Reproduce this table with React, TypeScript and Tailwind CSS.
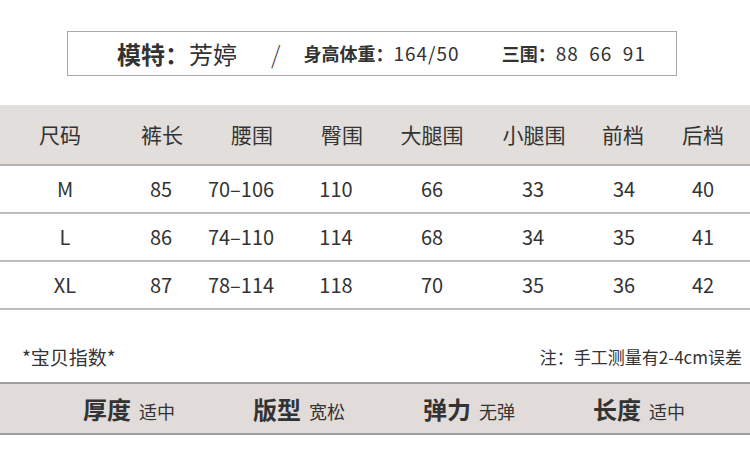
const font = "font-['Noto_Sans_CJK_SC','Noto_Sans',sans-serif]";

const headCells = [
  { label: '尺码', w: 'w-[120px]' },
  { label: '裤长', w: 'w-[84px]' },
  { label: '腰围', w: 'w-[96px]' },
  { label: '臀围', w: 'w-[84px]' },
  { label: '大腿围', w: 'w-[96px]' },
  { label: '小腿围', w: 'w-[108px]' },
  { label: '前档', w: 'w-[70px]' },
  { label: '后档', w: 'w-[90px]' },
];

const bodyWidths = [
  'w-[130px]', 'w-[62px]', 'w-[98px]', 'w-[92px]',
  'w-[100px]', 'w-[102px]', 'w-[80px]', 'w-[78px]',
];

const rows = [
  ['M', '85', '70–106', '110', '66', '33', '34', '40'],
  ['L', '86', '74–110', '114', '68', '34', '35', '41'],
  ['XL', '87', '78–114', '118', '70', '35', '36', '42'],
];

const traits = [
  { name: '厚度', value: '适中' },
  { name: '版型', value: '宽松' },
  { name: '弹力', value: '无弹' },
  { name: '长度', value: '适中' },
];

export default function App() {
  return (
    <div className={`w-[750px] h-[454px] bg-white text-[#333] overflow-hidden ${font}`}>
      {/* model info box */}
      <div className="pt-[31px] pl-[67px]">
        <div className="w-[610px] h-[45px] border border-[#a8a8a8] flex items-center">
          <div className="pl-[49px] flex items-center">
            <span className="text-[24px] font-bold">模特：</span>
            <span className="text-[24px]">芳婷</span>
          </div>
          <span className="ml-[34px] text-[24px] font-light text-[#444]">/</span>
          <div className="ml-[23px] flex items-center">
            <span className="text-[18px] font-bold">身高体重：</span>
            <span className="text-[19px] tracking-[1px]">164/50</span>
          </div>
          <div className="ml-[42px] flex items-center">
            <span className="text-[18px] font-bold">三围：</span>
            <span className="text-[19px] tracking-[1px] whitespace-pre">88  66  91</span>
          </div>
        </div>
      </div>

      {/* size table */}
      <div className="mt-[29px]">
        <div className="h-[61px] bg-[#e2dedb] border-b-2 border-[#b3b3b3] flex items-center">
          {headCells.map((c) => (
            <div key={c.label} className={`${c.w} flex justify-center whitespace-nowrap text-[21px]`}>
              {c.label}
            </div>
          ))}
        </div>
        {rows.map((r) => (
          <div key={r[0]} className="h-[48px] border-b-2 border-[#bdbdbd] flex items-center">
            {r.map((v, i) => (
              <div key={i} className={`${bodyWidths[i]} flex justify-center whitespace-nowrap text-[20px]`}>
                {v}
              </div>
            ))}
          </div>
        ))}
      </div>

      {/* notes */}
      <div className="h-[72px] flex items-center justify-between pl-[22px] pr-[8px] pt-[22px]">
        <span className="text-[19px]">*宝贝指数*</span>
        <span className="text-[17px]">注：手工测量有2-4cm误差</span>
      </div>

      {/* traits band */}
      <div className="h-[53px] bg-[#e1dcda] border-y-2 border-[#9e9e9e] flex items-center pl-[44px]">
        {traits.map((t) => (
          <div key={t.name} className="w-[170px] flex justify-center items-baseline gap-[8px]">
            <span className="text-[24px] font-bold">{t.name}</span>
            <span className="text-[18px]">{t.value}</span>
          </div>
        ))}
      </div>
    </div>
  );
}
